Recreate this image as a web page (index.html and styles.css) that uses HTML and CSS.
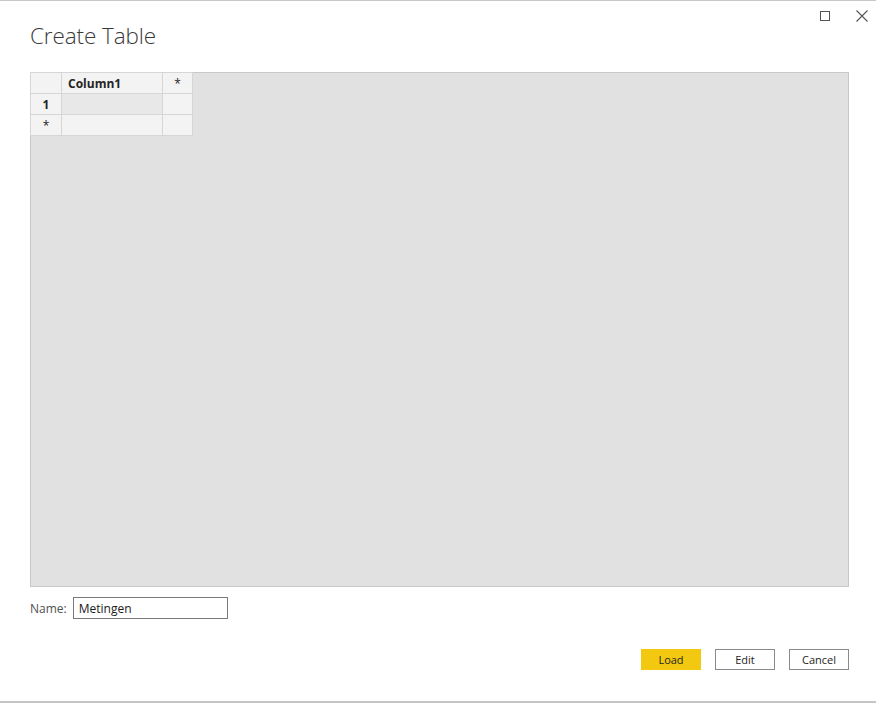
FILE: index.html
```html
<!DOCTYPE html>
<html lang="en">
<head>
  <meta charset="UTF-8">
  <title>Create Table</title>
  <link rel="stylesheet" href="styles.css">
</head>
<body>

  <!-- Dialog -->
  <div class="dialog">
    <div class="window-controls">
      <svg class="ctrl" width="11" height="11" viewBox="0 0 11 11"><rect x="0.5" y="0.5" width="9" height="9" fill="none" stroke="#555" stroke-width="1"/></svg>
      <svg class="ctrl" width="12" height="12" viewBox="0 0 12 12"><path d="M0.5 0.5 L11.5 11.5 M11.5 0.5 L0.5 11.5" stroke="#555" stroke-width="1.1" fill="none"/></svg>
    </div>

    <h1 class="title">Create Table</h1>

    <!-- Grid area -->
    <div class="grid-area">
      <table class="data-table">
        <tr>
          <th class="rowhead"></th>
          <th class="colhead">Column1</th>
          <th class="addcol">*</th>
        </tr>
        <tr>
          <th class="rowhead">1</th>
          <td class="cell selected"></td>
          <td class="cell"></td>
        </tr>
        <tr>
          <th class="rowhead star">*</th>
          <td class="cell"></td>
          <td class="cell"></td>
        </tr>
      </table>
    </div>

    <div class="name-row">
      <label class="name-label" for="name">Name:</label>
      <input id="name" class="name-input" type="text" value="Metingen">
    </div>

    <div class="buttons">
      <button class="btn load">Load</button>
      <button class="btn">Edit</button>
      <button class="btn">Cancel</button>
    </div>
  </div>

</body>
</html>
```

FILE: styles.css
```css
/* General styles */
body {
  margin: 0;
  background-color: #ffffff;
  font-family: 'Open Sans', 'Noto Sans', sans-serif;
  color: #252423;
}

.dialog {
  width: 876px;
  height: 703px;
  box-sizing: border-box;
  border-top: 1px solid #c8c8c8;
  border-bottom: 2px solid #c4c4c4;
  padding: 0 27px 0 30px;
  position: relative;
  display: flex;
  flex-direction: column;
}

/* Window buttons */
.window-controls {
  position: absolute;
  top: 9px;
  right: 8px;
  display: flex;
  align-items: center;
  gap: 24px;
}

.ctrl {
  display: block;
}

.ctrl:first-child {
  margin-right: 1px;
}

.title {
  margin: 20px 0 0 0;
  font-size: 22.5px;
  font-weight: 300;
  color: #3b3a39;
  line-height: 30px;
  letter-spacing: -0.1px;
}

/* Grid area */
.grid-area {
  margin-top: 21px;
  height: 515px;
  background-color: #e1e1e1;
  border: 1px solid #c8c8c8;
  box-sizing: border-box;
  width: 819px;
}

.data-table {
  border-collapse: collapse;
  margin: -1px 0 0 -1px;
  font-size: 12px;
}

.data-table th,
.data-table td {
  border: 1px solid #d6d6d6;
  height: 21px;
  padding: 0;
  background-color: #f3f3f3;
  box-sizing: border-box;
}

.rowhead {
  width: 31px;
  font-weight: 700;
  text-align: center;
}

.rowhead.star {
  font-weight: 400;
}

.colhead {
  width: 101px;
  text-align: left;
  padding-left: 6px !important;
  font-weight: 700;
}

.addcol {
  width: 30px;
  font-weight: 400;
}

.data-table td.selected {
  background-color: #e8e8e8;
}

/* Name */
.name-row {
  margin-top: 10px;
  display: flex;
  align-items: center;
  gap: 6px;
}

.name-label {
  font-size: 12px;
  color: #505050;
}

.name-input {
  width: 155px;
  height: 22px;
  box-sizing: border-box;
  border: 1px solid #7a7a7a;
  font-family: 'Open Sans', 'Noto Sans', sans-serif;
  font-size: 12px;
  padding: 0 5px;
  color: #1a1a1a;
  margin: 0;
}

/* Buttons */
.buttons {
  margin-top: 30px;
  display: flex;
  justify-content: flex-end;
  gap: 14px;
}

.btn {
  width: 60px;
  height: 21px;
  box-sizing: border-box;
  border: 1px solid #8a8a8a;
  background-color: #ffffff;
  font-family: 'Open Sans', 'Noto Sans', sans-serif;
  font-size: 11px;
  color: #252423;
  padding: 0;
  margin: 0;
}

.btn.load {
  background-color: #f2c811;
  border-color: #f2c811;
}
```
